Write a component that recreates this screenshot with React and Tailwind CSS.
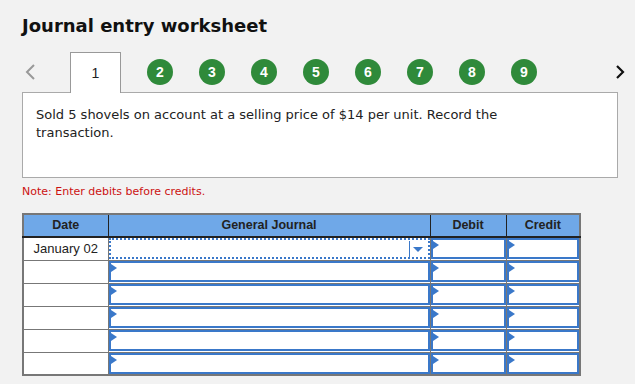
import React from 'react'

const steps = [2, 3, 4, 5, 6, 7, 8, 9]

const Flag = () => (
  <span className="absolute left-0 top-[1px] w-0 h-0 border-y-[4px] border-y-transparent border-l-[6px] border-l-[#3a78c9]" />
)

const InputCell = () => (
  <td className="p-0 border border-[#777] h-[23px] bg-white">
    <div className="relative h-[21px] border-2 border-[#3a78c9]">
      <Flag />
    </div>
  </td>
)

const App = () => {
  const rows = [0, 1, 2, 3, 4, 5]
  return (
    <div className="w-[635px] h-[384px] bg-[#f2f2f2] overflow-hidden" style={{ fontFamily: '"DejaVu Sans", Verdana, sans-serif' }}>
      <h1 className="pl-[22px] pt-[15px] text-[18px] font-bold text-[#111] leading-[22px]">
        Journal entry worksheet
      </h1>

      <div className="flex items-end h-[40px] mt-[15px] pl-[22px]">
        <div className="w-[48px] h-[40px] flex items-center pl-[2px] text-[#999]">
          <svg width="14" height="18" viewBox="0 0 14 18">
            <path d="M10 2 L3 9 L10 16" fill="none" stroke="currentColor" strokeWidth="2" />
          </svg>
        </div>
        <div className="w-[51px] h-[41px] -mb-[1px] bg-white border border-b-0 border-[#999] flex items-center justify-center text-[14px] text-[#222] relative z-10" style={{ fontFamily: '"Liberation Sans", Arial, sans-serif' }}>
          1
        </div>
        <div className="flex items-center h-[40px] gap-[26px] pl-[26px]">
          {steps.map((n) => (
            <div
              key={n}
              className="w-[26px] h-[26px] rounded-full bg-[#2f8a3a] text-white font-bold text-[14px] flex items-center justify-center"
              style={{ fontFamily: '"Liberation Sans", Arial, sans-serif' }}
            >
              {n}
            </div>
          ))}
        </div>
        <div className="flex-1" />
        <div className="h-[40px] flex items-center pr-[9px] text-[#111]">
          <svg width="12" height="18" viewBox="0 0 12 18">
            <path d="M3 3 L9 9 L3 15" fill="none" stroke="currentColor" strokeWidth="2.2" />
          </svg>
        </div>
      </div>

      <div className="ml-[22px] w-[596px] h-[86px] bg-white border border-[#aaa] pt-[13px] pl-[13px] pr-[100px] text-[13px] leading-[18px] text-[#222]">
        Sold 5 shovels on account at a selling price of $14 per unit. Record the transaction.
      </div>

      <p className="pl-[22px] mt-[7px] text-[11px] leading-[14px] text-[#cc1111]">
        Note: Enter debits before credits.
      </p>

      <table
        className="ml-[22px] mt-[14px] border-collapse border-2 border-[#777] text-[12.5px]"
        style={{ fontFamily: '"Liberation Sans", Arial, sans-serif', tableLayout: 'fixed', width: '557px' }}
      >
        <colgroup>
          <col style={{ width: '85px' }} />
          <col style={{ width: '322px' }} />
          <col style={{ width: '76px' }} />
          <col style={{ width: '74px' }} />
        </colgroup>
        <thead>
          <tr className="h-[23px] bg-[#6fa8e8] text-[#222] font-bold">
            <th className="p-0 border-r border-b-2 border-[#222] font-bold">Date</th>
            <th className="p-0 border-r border-b-2 border-[#222] font-bold">General Journal</th>
            <th className="p-0 border-r border-b-2 border-[#222] font-bold">Debit</th>
            <th className="p-0 border-b-2 border-[#222] font-bold">Credit</th>
          </tr>
        </thead>
        <tbody>
          {rows.map((r) => (
            <tr key={r} className="h-[23px]">
              <td className="border border-[#777] bg-white text-center text-[13px] text-[#222] p-0">
                {r === 0 ? 'January 02' : ''}
              </td>
              {r === 0 ? (
                <td className="p-0 border border-[#777] h-[23px] bg-white">
                  <div className="relative h-[21px] border-2 border-dotted border-[#3a78c9]">
                    <span className="absolute right-[18px] top-[1px] h-[17px] w-[1px] bg-[#3a78c9]" />
                    <span className="absolute right-[5px] top-[7px] w-0 h-0 border-x-[5px] border-x-transparent border-t-[5px] border-t-[#3a78c9]" />
                  </div>
                </td>
              ) : (
                <InputCell />
              )}
              <InputCell />
              <InputCell />
            </tr>
          ))}
        </tbody>
      </table>
    </div>
  )
}

export default App
